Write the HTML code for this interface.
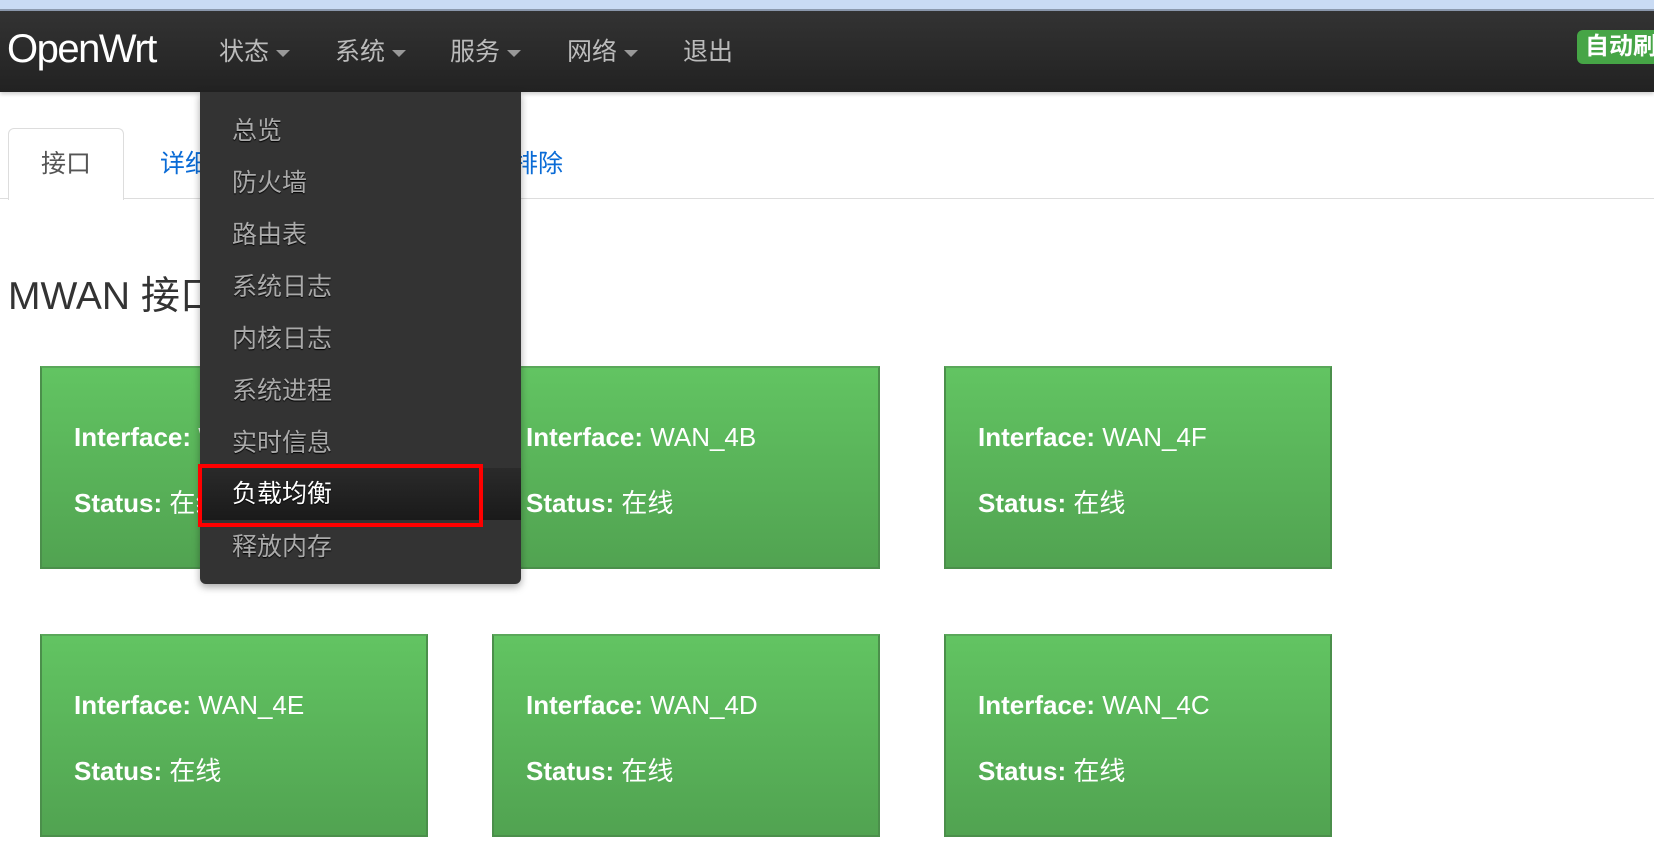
<!DOCTYPE html>
<html><head><meta charset="utf-8">
<style>
*{margin:0;padding:0;box-sizing:border-box}
body{width:1654px;height:866px;overflow:hidden;background:#fff;position:relative;font-family:"Liberation Sans","Noto Sans CJK SC",sans-serif}
.top{position:absolute;left:0;top:0;width:1654px;height:11px;background:#c9dbf4;border-bottom:2px solid #8e9bb0}
.nav{position:absolute;left:0;top:11px;width:1654px;height:81px;background:linear-gradient(#333,#222);box-shadow:0 2px 4px rgba(0,0,0,.2)}
.brand{position:absolute;left:7px;top:16px;font-size:40px;color:#fff;font-weight:300;letter-spacing:-1.5px;line-height:44px}
.mi{position:absolute;top:25px;font-size:25px;color:#bbb;line-height:32px;white-space:nowrap}
.caret{display:inline-block;width:0;height:0;border-left:7px solid transparent;border-right:7px solid transparent;border-top:7px solid #999;margin-left:7px;vertical-align:middle}
.badge{position:absolute;left:1577px;top:30px;width:110px;height:34px;background:#46a546;border-radius:6px;color:#fff;font-weight:bold;font-size:24px;line-height:34px;padding-left:8px;white-space:nowrap;overflow:hidden}
.tabline{position:absolute;left:0;top:198px;width:1654px;height:1px;background:#ddd}
.tab{position:absolute;left:8px;top:128px;width:116px;height:72px;border:1px solid #ddd;border-bottom:none;border-radius:6px 6px 0 0;background:#fff;font-size:25px;color:#555;text-align:center;line-height:70px}
.tl{position:absolute;top:149px;font-size:25px;color:#0a6bd6;line-height:30px;white-space:nowrap}
h2{position:absolute;left:8px;top:274px;font-size:39px;font-weight:normal;color:#333;line-height:46px}
.card{position:absolute;width:388px;height:203px;background:linear-gradient(#62c462,#51a351);border:2px solid #4b8f4b;border-top-color:#5aa85a;color:#fff;font-size:26px}
.card .a{position:absolute;left:32px;top:54px;line-height:30px;white-space:nowrap}
.card .b{position:absolute;left:32px;top:120px;line-height:30px;white-space:nowrap}
.card b{font-weight:bold}
.dd{position:absolute;left:200px;top:92px;width:321px;height:492px;background:#333;border-radius:0 0 6px 6px;box-shadow:0 3px 8px rgba(0,0,0,.35)}
.di{position:absolute;left:32px;font-size:25px;color:#aaa;line-height:30px;text-shadow:0 1px 1px #000;white-space:nowrap}
.hl{position:absolute;left:0;top:376px;width:321px;height:52px;background:linear-gradient(#2a2a2a,#1a1a1a)}
.red{position:absolute;left:198px;top:464px;width:285px;height:63px;border:4px solid #f00}
</style></head><body>
<div class="top"></div>
<div class="nav">
<div class="brand">OpenWrt</div>
<div class="mi" style="left:219px">状态<span class="caret"></span></div>
<div class="mi" style="left:335px">系统<span class="caret"></span></div>
<div class="mi" style="left:450px">服务<span class="caret"></span></div>
<div class="mi" style="left:567px">网络<span class="caret"></span></div>
<div class="mi" style="left:683px">退出</div>
</div>
<div class="badge">自动刷新</div>
<div class="tabline"></div>
<div class="tab">接口</div>
<div class="tl" style="left:160px">详细信息</div>
<div class="tl" style="left:463px">故障排除</div>
<h2>MWAN 接口</h2>
<div class="card" style="left:40px;top:366px"><div class="a"><b>Interface:</b> WAN_4A</div><div class="b"><b>Status:</b> 在线</div></div>
<div class="card" style="left:492px;top:366px"><div class="a"><b>Interface:</b> WAN_4B</div><div class="b"><b>Status:</b> 在线</div></div>
<div class="card" style="left:944px;top:366px"><div class="a"><b>Interface:</b> WAN_4F</div><div class="b"><b>Status:</b> 在线</div></div>
<div class="card" style="left:40px;top:634px"><div class="a"><b>Interface:</b> WAN_4E</div><div class="b"><b>Status:</b> 在线</div></div>
<div class="card" style="left:492px;top:634px"><div class="a"><b>Interface:</b> WAN_4D</div><div class="b"><b>Status:</b> 在线</div></div>
<div class="card" style="left:944px;top:634px"><div class="a"><b>Interface:</b> WAN_4C</div><div class="b"><b>Status:</b> 在线</div></div>
<div class="dd">
<div class="hl"></div>
<div class="di" style="top:24px">总览</div>
<div class="di" style="top:76px">防火墙</div>
<div class="di" style="top:128px">路由表</div>
<div class="di" style="top:180px">系统日志</div>
<div class="di" style="top:232px">内核日志</div>
<div class="di" style="top:284px">系统进程</div>
<div class="di" style="top:336px">实时信息</div>
<div class="di" style="top:387px;color:#fff">负载均衡</div>
<div class="di" style="top:440px">释放内存</div>
</div>
<div class="red"></div>
</body></html>
